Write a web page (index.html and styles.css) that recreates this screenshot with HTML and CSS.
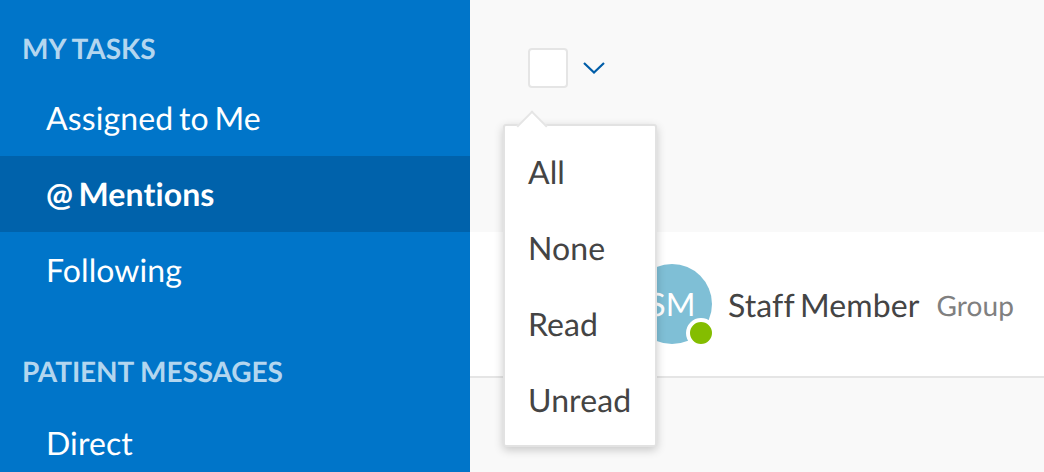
FILE: index.html
```html
<!DOCTYPE html>
<html lang="en">
<head>
    <meta charset="UTF-8">
    <title>My Tasks</title>
    <link rel="stylesheet" href="styles.css">
</head>
<body>
    <nav class="sidebar">
        <h2 class="nav-heading">MY TASKS</h2>
        <a class="nav-item">Assigned to Me</a>
        <a class="nav-item active">@ Mentions</a>
        <a class="nav-item">Following</a>
        <h2 class="nav-heading second">PATIENT MESSAGES</h2>
        <a class="nav-item">Direct</a>
    </nav>
    <main class="content">
        <div class="toolbar">
            <span class="checkbox"></span>
            <svg class="chevron" width="22" height="12" viewBox="0 0 22 12">
                <path d="M1 1l10 9.5L21 1" fill="none" stroke="#005da8" stroke-width="2.2"/>
            </svg>
        </div>
        <div class="message-row">
            <div class="avatar">SM<span class="status-dot"></span></div>
            <span class="name">Staff Member</span>
            <span class="group">Group</span>
        </div>
        <!-- Select dropdown -->
        <div class="dropdown">
            <div class="dropdown-item">All</div>
            <div class="dropdown-item">None</div>
            <div class="dropdown-item">Read</div>
            <div class="dropdown-item">Unread</div>
        </div>
    </main>
</body>
</html>
```

FILE: styles.css
```css
* {
    box-sizing: border-box;
}
body {
    font-family: 'Lato', sans-serif;
    font-variant-ligatures: none;
    text-rendering: geometricPrecision;
    letter-spacing: 0.1px;
    word-spacing: -2.5px;
    margin: 0;
    display: flex;
    height: 472px;
    overflow: hidden;
    color: #444;
}
.sidebar {
    width: 470px;
    flex-shrink: 0;
    background: #0075c9;
    color: #fff;
    overflow: hidden;
}
.nav-heading {
    margin: 0;
    height: 80px;
    padding: 30px 0 0 22px;
    font-size: 28px;
    line-height: 36px;
    font-weight: 700;
    color: #b3d6ef;
    letter-spacing: 0;
    word-spacing: 0;
}
.nav-heading.second {
    height: 97px;
    padding-top: 45px;
    letter-spacing: -0.1px;
}
.nav-item {
    display: block;
    height: 76px;
    padding-left: 46px;
    font-size: 32px;
    line-height: 76px;
}
.nav-item.active {
    background: #0062ab;
    font-weight: 700;
}
.content {
    flex: 1;
    position: relative;
    background: #f9f9f9;
}
.toolbar {
    height: 232px;
    padding: 48px 0 0 58px;
    display: flex;
    align-items: flex-start;
}
.checkbox {
    width: 40px;
    height: 40px;
    background: #fff;
    border: 2px solid #e5e5e5;
    border-radius: 4px;
}
.chevron {
    margin: 14px 0 0 15px;
}
.message-row {
    height: 146px;
    background: #fff;
    border-bottom: 2px solid #e5e5e5;
    padding-left: 162px;
    display: flex;
    align-items: center;
}
.avatar {
    position: relative;
    width: 80px;
    height: 80px;
    border-radius: 50%;
    background: #7fbfd6;
    color: #fff;
    font-size: 32px;
    text-align: center;
    line-height: 80px;
    margin-right: 16px;
}
.status-dot {
    position: absolute;
    right: -4px;
    bottom: -4px;
    width: 30px;
    height: 30px;
    border-radius: 50%;
    background: #84bd00;
    border: 4px solid #fff;
}
.name {
    font-size: 32px;
    margin-right: 17px;
}
.group {
    font-size: 28px;
    color: #808080;
    padding-top: 2px;
}
.dropdown {
    position: absolute;
    left: 33px;
    top: 124px;
    width: 154px;
    height: 323px;
    background: #fff;
    border: 2px solid #e2e2e2;
    border-radius: 3px;
    box-shadow: 0 3px 10px rgba(0, 0, 0, 0.2);
    padding-top: 8px;
}
.dropdown::before {
    content: "";
    position: absolute;
    left: 16px;
    top: -11px;
    width: 20px;
    height: 20px;
    background: #fff;
    border-top: 2px solid #e5e5e5;
    border-left: 2px solid #e5e5e5;
    transform: rotate(45deg);
}
.dropdown-item {
    position: relative;
    height: 76px;
    line-height: 76px;
    padding-left: 23px;
    font-size: 32px;
}
```
